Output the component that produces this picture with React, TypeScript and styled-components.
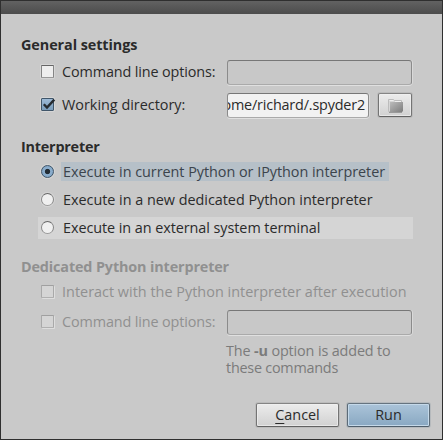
import React from "react";
import styled, { createGlobalStyle, css } from "styled-components";

const Global = createGlobalStyle`
  * { box-sizing: border-box; }
  body { margin: 0; background: #c9c9c9; }
`;

const Dialog = styled.div`
  width: 443px;
  height: 440px;
  display: flex;
  flex-direction: column;
  border: 1px solid #2f2f2f;
  background: #c9c9c9;
  color: #2b2b2b;
  font: 14.4px/20px "Open Sans", "Noto Sans", sans-serif;
  overflow: hidden;
`;

const TitleBar = styled.div`
  height: 13px;
  background: linear-gradient(#626262, #4c4c4c);
`;

const Body = styled.div`
  flex: 1;
  padding: 21px 30px 0 20px;
`;

const Section = styled.section<{ $disabled?: boolean }>`
  display: flow-root;
  margin-bottom: 16px;
  ${(p) => p.$disabled && css`color: #909090;`}
`;

const Text = styled.span<{ $spacing?: number }>`
  letter-spacing: ${(p) => p.$spacing ?? 0}px;
  white-space: nowrap;
`;

const Heading = styled.h2<{ $spacing?: number }>`
  margin: 0;
  height: 20px;
  font-size: 14.4px;
  font-weight: 700;
  letter-spacing: ${(p) => p.$spacing ?? 0}px;
  white-space: nowrap;
`;

const Row = styled.div<{ $height?: number }>`
  height: ${(p) => p.$height ?? 33}px;
  padding-left: 20px;
  display: flex;
  align-items: center;
`;

const OptionLabel = styled.label`
  width: 186px;
  flex: none;
  display: flex;
  align-items: center;
  gap: 8px;
`;

const Box = styled.span<{ $checked?: boolean; $disabled?: boolean }>`
  width: 13px;
  height: 13px;
  flex: none;
  border: 1px solid #777;
  border-color: #656565 #858585 #999 #858585;
  border-radius: 1px;
  background: #eee;
  box-shadow: 0 0 0 1px #d6d6d6;
  ${(p) => p.$checked && css`
    border-color: #40566a;
    background: linear-gradient(#9dbad6, #789cbb);
  `}
  ${(p) => p.$disabled && css`
    border-color: #a0a0a0 #a9a9a9 #b0b0b0;
    background: #d5d5d5;
    box-shadow: 1px 1px 0 #dedede;
  `}
  svg { display: block; overflow: visible; }
`;

const Field = styled.div<{ $filled?: boolean }>`
  width: ${(p) => (p.$filled ? 142 : 185)}px;
  height: 25px;
  margin-top: 2px;
  display: flex;
  justify-content: flex-end;
  align-items: center;
  padding: 0 3px 1px 0;
  overflow: hidden;
  border: 1px solid #999;
  border-color: #777 #8b8b8b #aaa;
  border-radius: 3px;
  background: ${(p) => (p.$filled ? "#f2f2f2" : "#c8c8c8")};
  box-shadow: 0 1px 0 #e0e0e0, 1px 0 0 #d9d9d9;
`;

const Button = styled.button<{ $primary?: boolean; $width: number }>`
  width: ${(p) => p.$width}px;
  height: 24px;
  padding: 0;
  display: flex;
  align-items: center;
  justify-content: center;
  font: inherit;
  color: #2b2b2b;
  border: 1px solid #777;
  border-color: #858585 #747474 #626262;
  border-radius: 2px;
  background: linear-gradient(#ececec, #d1d1d1);
  box-shadow: inset 0 0 0 1px #f2f2f2aa, 0 0 0 1px #bcbcbc;
  ${(p) => p.$primary && css`
    border-color: #66747f #5c6b78 #4f5e6b;
    background: linear-gradient(#abc4d9, #89a8c2);
    box-shadow: inset 0 0 0 1px #c5d9e9, 0 0 0 1px #b6babd;
  `}
`;

const BrowseButton = styled(Button)`
  margin: 1px 0 0 9px;
`;

const RadioList = styled.div`
  display: grid;
  gap: 6px;
  margin: 4px 0 2px 17px;
`;

const RadioRow = styled.div<{ $hover?: boolean }>`
  width: 375px;
  height: 22px;
  padding: 0 0 1px 3px;
  display: flex;
  align-items: center;
  gap: 7px;
  ${(p) => p.$hover && css`background: #d5d5d5;`}
`;

const RadioText = styled.span<{ $selected?: boolean }>`
  height: 19px;
  line-height: 19px;
  padding: 0 4px 0 2px;
  ${(p) => p.$selected && css`
    width: 328px;
    background: #b6c0c8;
    color: #3b444c;
  `}
`;

const Dot = styled.span<{ $on?: boolean }>`
  width: 13px;
  height: 13px;
  flex: none;
  border: 1px solid #777;
  border-color: #666 #858585 #999;
  border-radius: 50%;
  background: #f0f0f0;
  box-shadow: 0 0 0 1px #d6d6d6;
  ${(p) => p.$on && css`
    border-color: #40566a;
    background: radial-gradient(circle at 50% 50%, #222c35 0 2.2px, #8eb0cf 3.1px, #80a4c4 6px);
  `}
`;

const Hint = styled.p`
  margin: 5px 0 0 205px;
  line-height: 17px;
  color: #7b7b7b;
`;

const Line = styled.span<{ $spacing: number }>`
  display: block;
  letter-spacing: ${(p) => p.$spacing}px;
  white-space: nowrap;
`;

const Footer = styled.div`
  display: flex;
  justify-content: flex-end;
  gap: 8px;
  padding: 0 12px 12px 0;
`;

const Mnemonic = styled.span`
  text-decoration: underline;
  text-underline-offset: 3px;
  text-decoration-thickness: 1px;
`;

const CheckMark = () => (
  <svg width="13" height="12" viewBox="0 0 13 12" fill="none">
    <path d="M1.8 5.2 5 8.6 12.300 0.600" stroke="#252b31" strokeWidth="2.4" />
  </svg>
);

const Folder = () => (
  <svg width="17" height="15" viewBox="0 0 17 15">
    <defs>
      <linearGradient id="folderFront" x1="0" y1="0" x2="1" y2="1">
        <stop offset="0" stopColor="#bcbcbc" />
        <stop offset="1" stopColor="#7c7c7c" />
      </linearGradient>
    </defs>
    <path d="M1.500 13.500V1.500h5l1 1h7v11z" fill="#d6d6d6" stroke="#bcbcbc" />
    <path d="M2.500 2.500h4M8 3.500h6" stroke="#eee" />
    <path d="M3 4h13v9l-1 1H3z" fill="url(#folderFront)" />
    <path d="M2 14.500h13" stroke="#9a9a9a" />
  </svg>
);

export default function App() {
  return (
    <>
      <Global />
      <Dialog>
        <TitleBar />
        <Body>
          <Section>
            <Heading $spacing={-0.07}>General settings</Heading>
            <Row>
              <OptionLabel><Box /><Text $spacing={-0.12}>Command line options:</Text></OptionLabel>
              <Field />
            </Row>
            <Row>
              <OptionLabel><Box $checked><CheckMark /></Box><Text>Working directory:</Text></OptionLabel>
              <Field $filled><Text $spacing={-0.18}>ome/richard/.spyder2</Text></Field>
              <BrowseButton $width={34} aria-label="Browse"><Folder /></BrowseButton>
            </Row>
          </Section>
          <Section>
            <Heading $spacing={-0.22}>Interpreter</Heading>
            <RadioList>
              <RadioRow>
                <Dot $on />
                <RadioText $selected><Text $spacing={-0.03}>Execute in current Python or IPython interpreter</Text></RadioText>
              </RadioRow>
              <RadioRow>
                <Dot />
                <RadioText><Text $spacing={-0.02}>Execute in a new dedicated Python interpreter</Text></RadioText>
              </RadioRow>
              <RadioRow $hover>
                <Dot />
                <RadioText><Text $spacing={-0.06}>Execute in an external system terminal</Text></RadioText>
              </RadioRow>
            </RadioList>
          </Section>
          <Section $disabled>
            <Heading $spacing={-0.14}>Dedicated Python interpreter</Heading>
            <Row $height={29}>
              <OptionLabel><Box $disabled /><Text $spacing={0.02}>Interact with the Python interpreter after execution</Text></OptionLabel>
            </Row>
            <Row $height={31}>
              <OptionLabel><Box $disabled /><Text $spacing={-0.12}>Command line options:</Text></OptionLabel>
              <Field />
            </Row>
            <Hint>
              <Line $spacing={-0.14}>The <b>-u</b> option is added to</Line>
              <Line $spacing={-0.24}>these commands</Line>
            </Hint>
          </Section>
        </Body>
        <Footer>
          <Button $width={83}><Text><Mnemonic>C</Mnemonic>ancel</Text></Button>
          <Button $width={83} $primary><Text>Run</Text></Button>
        </Footer>
      </Dialog>
    </>
  );
}
